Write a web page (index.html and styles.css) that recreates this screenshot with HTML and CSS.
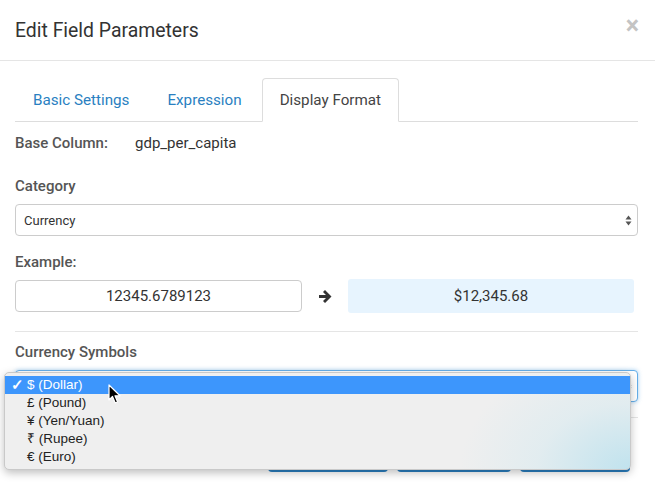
FILE: index.html
```html
<!DOCTYPE html>
<html>
<head>
<meta charset="utf-8">
<link rel="stylesheet" href="styles.css">
</head>
<body>
<div class="modal">
  <div class="modal-header">
    <h4 class="modal-title">Edit Field Parameters</h4>
    <span class="close">×</span>
  </div>
  <div class="modal-body">
    <ul class="tabs">
      <li class="tab"><a>Basic Settings</a></li>
      <li class="tab"><a>Expression</a></li>
      <li class="tab active"><a>Display Format</a></li>
    </ul>
    <div class="base-row">
      <span class="label">Base Column:</span>
      <span class="base-value">gdp_per_capita</span>
    </div>
    <div class="label block-label cat-label">Category</div>
    <div class="select">
      <span>Currency</span>
      <svg class="updown" width="7" height="11" viewBox="0 0 7 11"><path d="M3.5 0.5 L6.5 4.5 L0.5 4.5 Z M3.5 10.5 L6.5 6.5 L0.5 6.5 Z" fill="#555"/></svg>
    </div>
    <div class="label block-label ex-label">Example:</div>
    <div class="example-row">
      <div class="ex-input">12345.6789123</div>
      <svg class="arrow" width="14" height="13" viewBox="0 0 14 13"><path d="M1 5 H8 L5 2 L7 0 L13.5 6.5 L7 13 L5 11 L8 8 H1 Z" fill="#333"/></svg>
      <div class="ex-result">$12,345.68</div>
    </div>
    <hr class="sep">
    <div class="label block-label cur-label">Currency Symbols</div>
    <div class="select focused">
      <span>$ (Dollar)</span>
      <svg class="updown" width="7" height="11" viewBox="0 0 7 11"><path d="M3.5 0.5 L6.5 4.5 L0.5 4.5 Z M3.5 10.5 L6.5 6.5 L0.5 6.5 Z" fill="#555"/></svg>
    </div>
  </div>
  <div class="modal-footer">
    <button class="btn btn-a">Cancel</button>
    <button class="btn btn-b">Apply</button>
    <button class="btn btn-c">Save</button>
  </div>
</div>

<div class="dropdown">
  <div class="opt selected"><span class="check">✓</span>$ (Dollar)</div>
  <div class="opt"><span class="check"></span>£ (Pound)</div>
  <div class="opt"><span class="check"></span>¥ (Yen/Yuan)</div>
  <div class="opt"><span class="check"></span>₹ (Rupee)</div>
  <div class="opt"><span class="check"></span>€ (Euro)</div>
</div>

<svg class="cursor" width="14" height="21" viewBox="0 0 14 21">
  <path d="M1 1 L1 16 L4.5 12.5 L7.2 19 L9.6 18 L7 11.8 L12 11.8 Z" fill="#000" stroke="#fff" stroke-width="1.2" stroke-linejoin="round"/>
</svg>
</body>
</html>
```
FILE: styles.css
```css
* { box-sizing: border-box; }
body {
  margin: 0;
  background: #fff;
  font-family: Roboto, "Liberation Sans", sans-serif;
  color: #333;
  width: 655px;
  height: 502px;
  overflow: hidden;
  position: relative;
}
.modal { width: 655px; }
.modal-header {
  height: 61px;
  padding: 0 16px 0 15px;
  border-bottom: 1px solid #e5e5e5;
  display: flex;
  align-items: center;
  justify-content: space-between;
}
.modal-title {
  margin: 0;
  font-size: 19.4px;
  font-weight: 400;
  color: #333;
}
.close {
  font-size: 25px;
  font-weight: 700;
  color: #c4c4c4;
  line-height: 1;
  margin-top: -10px;
}
.modal-body { padding: 17px 17px 0 15px; }
.tabs {
  list-style: none;
  margin: 0;
  padding: 0;
  display: flex;
  border-bottom: 1px solid #ddd;
  height: 44px;
}
.tab {
  margin-right: 2px;
  margin-bottom: -1px;
}
.tab a {
  display: block;
  height: 44px;
  line-height: 42px;
  padding: 0 17px;
  border: 1px solid transparent;
  border-radius: 4px 4px 0 0;
  font-size: 15.2px;
  color: #2a7fc1;
}
.tab.active a {
  color: #444;
  background: #fff;
  border-color: #ddd #ddd #fff;
}
.label {
  font-size: 15px;
  font-weight: 500;
  color: #555;
}
.base-row {
  display: flex;
  margin-top: 11px;
  line-height: 20px;
}
.base-row .label { width: 120px; }
.base-value { font-size: 15px; color: #333; }
.block-label { line-height: 20px; }
.cat-label { margin-top: 23px; margin-bottom: 8px; }
.ex-label { margin-top: 16px; margin-bottom: 7px; }
.cur-label { margin-top: 10px; margin-bottom: 8px; }
.select {
  height: 32px;
  border: 1px solid #ccc;
  border-radius: 4px;
  display: flex;
  align-items: center;
  justify-content: space-between;
  padding: 0 5px 0 8px;
  font-size: 13px;
  color: #333;
  background: #fff;
}
.select.focused {
  border-color: #66afe9;
  box-shadow: 0 0 4px rgba(102,175,233,.6);
}
.example-row {
  display: flex;
  align-items: center;
}
.ex-input {
  width: 287px;
  height: 32px;
  border: 1px solid #ccc;
  border-radius: 4px;
  display: flex;
  align-items: center;
  justify-content: center;
  font-size: 15px;
  color: #333;
}
.arrow { margin: 0 16px 0 16px; }
.ex-result {
  width: 286px;
  height: 34px;
  background: #e7f4fe;
  border-radius: 3px;
  display: flex;
  align-items: center;
  justify-content: center;
  font-size: 15px;
  color: #333;
}
.sep {
  border: 0;
  border-top: 1px solid #e5e5e5;
  margin: 18px 0 0;
}
.modal-footer {
  margin: 15px 17px 0 15px;
  border-top: 1px solid #e5e5e5;
  padding-top: 15px;
  display: flex;
  justify-content: flex-end;
  gap: 9px;
  padding-right: 8px;
}
.btn {
  height: 39px;
  border: 0;
  border-radius: 4px;
  background: #2a7fc1;
  color: #fff;
  font-family: Roboto, sans-serif;
  font-size: 14px;
}
.btn-a { width: 120px; }
.btn-b { width: 114px; }
.btn-c { width: 110px; }
.dropdown {
  position: absolute;
  left: 4px;
  top: 372px;
  width: 627px;
  height: 98px;
  padding: 3px 0;
  border-radius: 5px;
  border: 1px solid #c9c9c9;
  background:
    radial-gradient(ellipse 170px 120px at 100% 100%, rgba(190,226,238,.95), rgba(215,234,240,.55) 55%, rgba(239,239,239,0) 100%),
    #efefef;
  box-shadow: 0 3px 8px rgba(0,0,0,.25);
  font-family: "Liberation Sans", Arial, sans-serif;
  font-size: 13.5px;
  color: #222;
}
.opt {
  height: 18px;
  line-height: 18px;
  display: flex;
  align-items: center;
  padding-left: 6px;
}
.opt.selected {
  background: #3d96fc;
  color: #fff;
}
.check {
  width: 16px;
  display: inline-block;
  font-size: 15px;
  font-weight: 700;
}
.cursor {
  position: absolute;
  left: 108px;
  top: 384px;
}
```
